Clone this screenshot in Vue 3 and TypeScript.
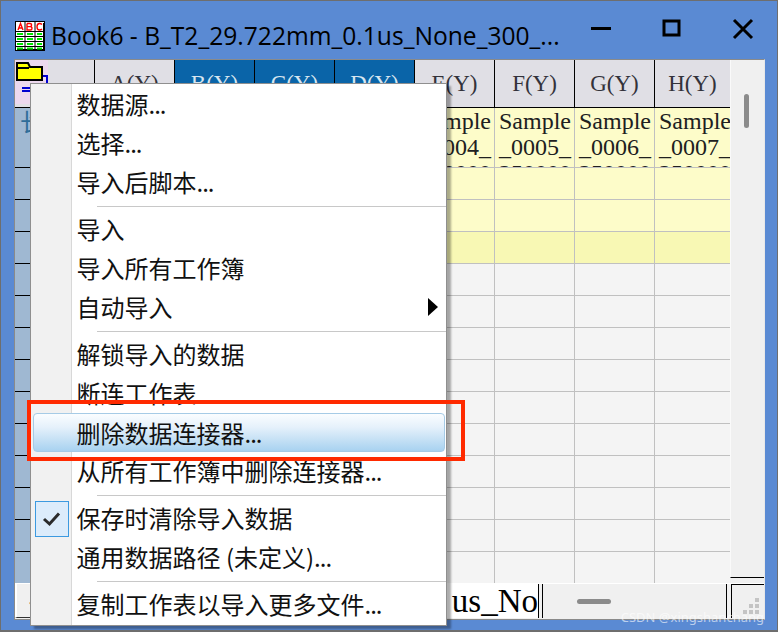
<script setup lang="ts">
type MenuEntry = { label?: string; dots?: boolean; sep?: boolean; hot?: boolean; checked?: boolean; sub?: boolean }

const columns = ['A(Y)', 'B(Y)', 'C(Y)', 'D(Y)', 'E(Y)', 'F(Y)', 'G(Y)', 'H(Y)']
const activeColumns = ['B(Y)', 'C(Y)', 'D(Y)']
const sampleCols = ['', '', '', '', '_0004_', '_0005_', '_0006_', '_0007_']

// 表格下半部分的行
const plainRows = Array.from({ length: 10 }, (_, i) => i)
const tintedRows = ['tint', 'tint', 'tint-strong']

const menu: MenuEntry[] = [
  { label: '数据源', dots: true },
  { label: '选择', dots: true },
  { label: '导入后脚本', dots: true },
  { sep: true },
  { label: '导入' },
  { label: '导入所有工作簿' },
  { label: '自动导入', sub: true },
  { sep: true },
  { label: '解锁导入的数据' },
  { label: '断连工作表' },
  { label: '删除数据连接器', dots: true, hot: true },
  { label: '从所有工作簿中删除连接器', dots: true },
  { sep: true },
  { label: '保存时清除导入数据', checked: true },
  { label: '通用数据路径 (未定义)', dots: true },
  { sep: true },
  { label: '复制工作表以导入更多文件', dots: true }
]
</script>

<template>
  <div class="window">
    <div class="titlebar">
      <svg class="book-icon" width="30" height="30" viewBox="0 0 30 30">
        <rect x="0.5" y="0.5" width="29" height="29" fill="#fff" stroke="#000" />
        <rect x="28" y="2" width="2" height="28" fill="#000" />
        <rect x="2" y="28" width="28" height="2" fill="#000" />
        <g fill="none" stroke="#f00" stroke-width="1.4">
          <path d="M3 9 L5.5 2.5 L8 9 M4 7 H7" />
          <path d="M12 2.5 V9 H15.5 Q17 9 17 7.2 Q17 5.6 15 5.6 H12 M15 5.6 Q16.6 5.6 16.6 4 Q16.6 2.5 15 2.5 H12" />
          <path d="M27 3.4 Q26 2.5 24.5 2.5 Q22 2.5 22 5.7 Q22 9 24.5 9 Q26 9 27 8" />
        </g>
        <path d="M0 10.5 H29 M0 15.5 H29 M0 20.5 H29 M0 25.5 H29 M10 0 V29 M20 0 V29" stroke="#000" fill="none" />
        <path d="M2 13 H8 M12 13 H18 M22 13 H27 M2 18 H8 M12 18 H18 M22 18 H27 M2 23 H8 M12 23 H18 M22 23 H27 M2 27.5 H8 M12 27.5 H18 M22 27.5 H27" stroke="#00e800" stroke-width="2" fill="none" />
      </svg>
      <span class="title">Book6 - B_T2_29.722mm_0.1us_None_300_...</span>
      <div class="win-buttons">
        <svg width="22" height="22" viewBox="0 0 22 22"><rect x="1" y="9" width="20" height="3" fill="#000" /></svg>
        <svg width="22" height="22" viewBox="0 0 22 22"><rect x="3" y="3" width="15" height="14" fill="none" stroke="#000" stroke-width="3" /></svg>
        <svg width="22" height="22" viewBox="0 0 22 22"><path d="M2 2 L20 20 M20 2 L2 20" stroke="#000" stroke-width="3" fill="none" /></svg>
      </div>
    </div>

    <div class="client">
      <div class="sheet-row">
        <div class="sheet">
          <div class="head-row">
            <div class="corner">
              <svg width="48" height="44" viewBox="0 0 48 44">
                <rect x="0" y="0" width="33" height="44" fill="#ecd8ee" />
                <path d="M26 16 H32 V24 M7 28 H15 M7 31 H15" stroke="#0000d0" stroke-width="2" fill="none" />
                <path d="M2 20 V3 H13 L15 7 H27 V20 Z" fill="#ffff00" stroke="#000" stroke-width="2" />
                <path d="M2 8 H14" stroke="#000" stroke-width="2" />
              </svg>
            </div>
            <div
              v-for="c in columns"
              :key="c"
              class="col-head"
              :class="{ active: activeColumns.includes(c) }"
            >{{ c }}</div>
          </div>

          <div class="data-row first">
            <div class="row-head">
              <span class="row-char">长</span>
            </div>
            <div v-for="(s, i) in sampleCols" :key="i" class="cell tint sample">
              <div>Sample</div>
              <div>{{ s }}</div>
              <div class="cut">250000</div>
            </div>
          </div>
          <div v-for="(t, r) in tintedRows" :key="r" class="data-row">
            <div class="row-head"></div>
            <div v-for="c in columns" :key="c" class="cell" :class="t"></div>
          </div>
          <div v-for="r in plainRows" :key="r" class="data-row">
            <div class="row-head"></div>
            <div v-for="c in columns" :key="c" class="cell"></div>
          </div>
        </div>
        <div class="vscroll"><span class="vthumb"></span></div>
      </div>

      <div class="bottom-row">
        <div class="tab-area">
          <div class="tab-arrow">‹</div>
          <div class="tab-name">us_No</div>
        </div>
        <div class="hscroll"><span class="hthumb"></span></div>
        <div class="grip">
          <svg width="16" height="16" viewBox="0 0 16 16" fill="#c4c4c4">
            <rect x="12" y="0" width="4" height="4" />
            <rect x="6" y="6" width="4" height="4" /><rect x="12" y="6" width="4" height="4" />
            <rect x="0" y="12" width="4" height="4" /><rect x="6" y="12" width="4" height="4" /><rect x="12" y="12" width="4" height="4" />
          </svg>
        </div>
      </div>
    </div>

    <!-- 右键菜单 -->
    <div class="menu">
      <template v-for="(m, i) in menu" :key="i">
        <div v-if="m.sep" class="sep"><span></span></div>
        <div v-else class="item" :class="{ hot: m.hot }">
          <span class="gutter">
            <span v-if="m.checked" class="check">
              <svg width="20" height="16" viewBox="0 0 20 16"><path d="M2 8 L7.5 13 L17 2.5" fill="none" stroke="#2b2b2b" stroke-width="3" /></svg>
            </span>
          </span>
          <span class="label">{{ m.label }}<span v-if="m.dots" class="dots">...</span></span>
          <span v-if="m.sub" class="arrow"></span>
        </div>
      </template>
    </div>

    <div class="red-box"></div>
    <div class="watermark">CSDN @xingshanchang</div>
  </div>
</template>

<style scoped>
.window {
  position: relative;
  width: 778px;
  height: 632px;
  box-sizing: border-box;
  overflow: hidden;
  background: #5a8ad3;
  border: 1px solid #6e6e6e;
  border-bottom-width: 2px;
  padding: 0 13px 0 13px;
  display: flex;
  flex-direction: column;
  font-family: "Noto Sans CJK SC", "Noto Sans", sans-serif;
}

.titlebar {
  height: 58px;
  flex: none;
  display: flex;
  align-items: center;
  padding-top: 12px;
  box-sizing: border-box;
}

.book-icon {
  margin-left: 1px;
  flex: none;
}

.title {
  margin-left: 6px;
  margin-top: -2px;
  font-family: "Open Sans", "Noto Sans", sans-serif;
  font-size: 24.6px;
  color: #000;
  white-space: nowrap;
}

.win-buttons {
  margin-left: auto;
  display: flex;
  gap: 49px;
  margin-top: -14px;
  margin-right: 10px;
}

.client {
  width: 751px;
  flex: none;
  background: #f0f0f0;
  border: 1px solid #8a8a8a;
  border-right: 1px solid #e8e8e8;
  box-sizing: border-box;
  height: 561px;
  display: flex;
  flex-direction: column;
}

.sheet-row {
  flex: none;
  height: 523px;
  display: flex;
}

.sheet {
  width: 715px;
  overflow: hidden;
  background: #f4f4f4;
}

.head-row,
.data-row {
  display: grid;
  grid-template-columns: 80px repeat(7, 80px) 75px;
}

.head-row {
  height: 48px;
  border-bottom: 1px solid #000;
  box-sizing: border-box;
}

.corner {
  background: #e0dfe5;
  border-right: 1px solid #000;
  position: relative;
}

.corner svg {
  position: absolute;
  left: 0;
  top: 0;
}

.col-head {
  background: #e0dfe5;
  border-right: 1px solid #000;
  color: #33323a;
  font-family: "Liberation Serif", serif;
  font-size: 23px;
  display: flex;
  align-items: center;
  justify-content: center;
}

.col-head:last-child {
  border-right: 0;
}

.col-head.active {
  background: #0a64a8;
  color: #d8e6f0;
}

.data-row {
  height: 32px;
}

.data-row.first {
  height: 60px;
}

.row-head {
  background: #9fb8d2;
  border-bottom: 1px solid #000;
  border-right: 1px solid #000;
  box-sizing: border-box;
  overflow: hidden;
  padding-left: 5px;
}

.row-char {
  color: #2f6d99;
  font-size: 24px;
  line-height: 26px;
}

.cell {
  border-right: 1px solid #c0c0c0;
  border-bottom: 1px solid #c0c0c0;
  box-sizing: border-box;
  overflow: hidden;
}

.cell:last-child {
  border-right: 0;
}

.tint {
  background: #fdfcc9;
}

.tint-strong {
  background: #f8f8b4;
}

.sample {
  font-family: "Liberation Serif", serif;
  font-size: 24px;
  line-height: 26px;
  color: #202020;
  padding: 0 0 0 4px;
  white-space: nowrap;
}

.vscroll {
  flex: 1;
  background: #f0f0f0;
  border-left: 1px solid #fafafa;
  border-bottom: 1px solid #000;
  height: 517px;
  position: relative;
}

.vthumb {
  display: block;
  width: 5px;
  height: 34px;
  margin: 34px 0 0 13px;
  background: #8b8b8b;
  border-radius: 3px;
}

.bottom-row {
  flex: 1;
  display: flex;
  background: #f0f0f0;
  border-top: 1px solid #fff;
  margin-bottom: 1px;
}

.tab-area {
  width: 524px;
  flex: none;
  display: flex;
  border-right: 1px solid #000;
  overflow: hidden;
  background: #fff;
  box-sizing: border-box;
}

.tab-arrow {
  width: 30px;
  flex: none;
  box-sizing: border-box;
  background: #f0f0f0;
  border-left: 2px solid #fff;
  border-bottom: 1px solid #333;
  display: flex;
  align-items: center;
  justify-content: center;
  font-size: 14px;
  color: #333;
}

.tab-name {
  flex: 1;
  display: flex;
  justify-content: flex-end;
  font-family: "Liberation Serif", serif;
  font-size: 33px;
  line-height: 34px;
  white-space: nowrap;
  overflow: hidden;
  color: #000;
}

.hscroll {
  width: 185px;
  flex: none;
  margin-left: 3px;
  border-left: 1px solid #000;
  border-right: 1px solid #000;
  box-sizing: border-box;
  display: flex;
  align-items: center;
}

.hthumb {
  display: block;
  width: 34px;
  height: 5px;
  background: #8b8b8b;
  border-radius: 3px;
  margin-left: 34px;
}

.grip {
  flex: 1;
  margin-left: 4px;
  border-left: 1px solid #000;
  border-top: 1px solid #000;
  display: flex;
  align-items: flex-end;
  justify-content: flex-end;
  padding: 0 5px 4px 0;
}

.menu {
  position: absolute;
  left: 29px;
  top: 82px;
  width: 417px;
  height: 543px;
  box-sizing: border-box;
  padding-top: 1px;
  background: linear-gradient(90deg, #f1f1f1 0, #f1f1f1 40px, #d8d8d8 40px, #d8d8d8 41px, #fff 41px);
  border: 1px solid #8f8f8f;
  box-shadow: 4px 3px 2px rgba(0, 0, 0, 0.32);
}

.item {
  position: relative;
  height: 39px;
  display: flex;
  align-items: center;
  font-size: 24px;
  color: #111;
}

.label {
  white-space: nowrap;
  margin-top: -2px;
}

.dots {
  letter-spacing: -1px;
}

.item.hot {
  margin: 0 1px 0 2px;
  border: 1px solid #a6cbe6;
  border-radius: 4px;
  box-sizing: border-box;
  background: linear-gradient(180deg, #fafdff 0%, #e6f1fb 35%, #a8d2f0 100%);
}

.item.hot .label {
  margin-top: 0;
}

.gutter {
  width: 45.5px;
  flex: none;
  display: flex;
  justify-content: center;
}

.item.hot .gutter {
  width: 42.5px;
}

.check {
  width: 34px;
  height: 36px;
  box-sizing: border-box;
  border: 1px solid #3c9ae0;
  background: #dcecfb;
  display: flex;
  align-items: center;
  justify-content: center;
  margin-left: -4px;
}

.arrow {
  position: absolute;
  right: 8px;
  top: 10px;
  border-left: 10px solid #000;
  border-top: 9px solid transparent;
  border-bottom: 9px solid transparent;
}

.sep {
  height: 8px;
  padding-left: 66px;
  display: flex;
  align-items: center;
}

.sep span {
  display: block;
  flex: 1;
  height: 1px;
  background: #c8c8c8;
}

.red-box {
  position: absolute;
  left: 26px;
  top: 399px;
  width: 438px;
  height: 61px;
  box-sizing: border-box;
  border: 4px solid #ff2a00;
}

.watermark {
  position: absolute;
  right: 13px;
  bottom: 4px;
  font-family: "Noto Sans", sans-serif;
  font-size: 13px;
  color: rgba(255, 255, 255, 0.6);
  white-space: nowrap;
}
</style>

<style>
body {
  margin: 0;
}
</style>
